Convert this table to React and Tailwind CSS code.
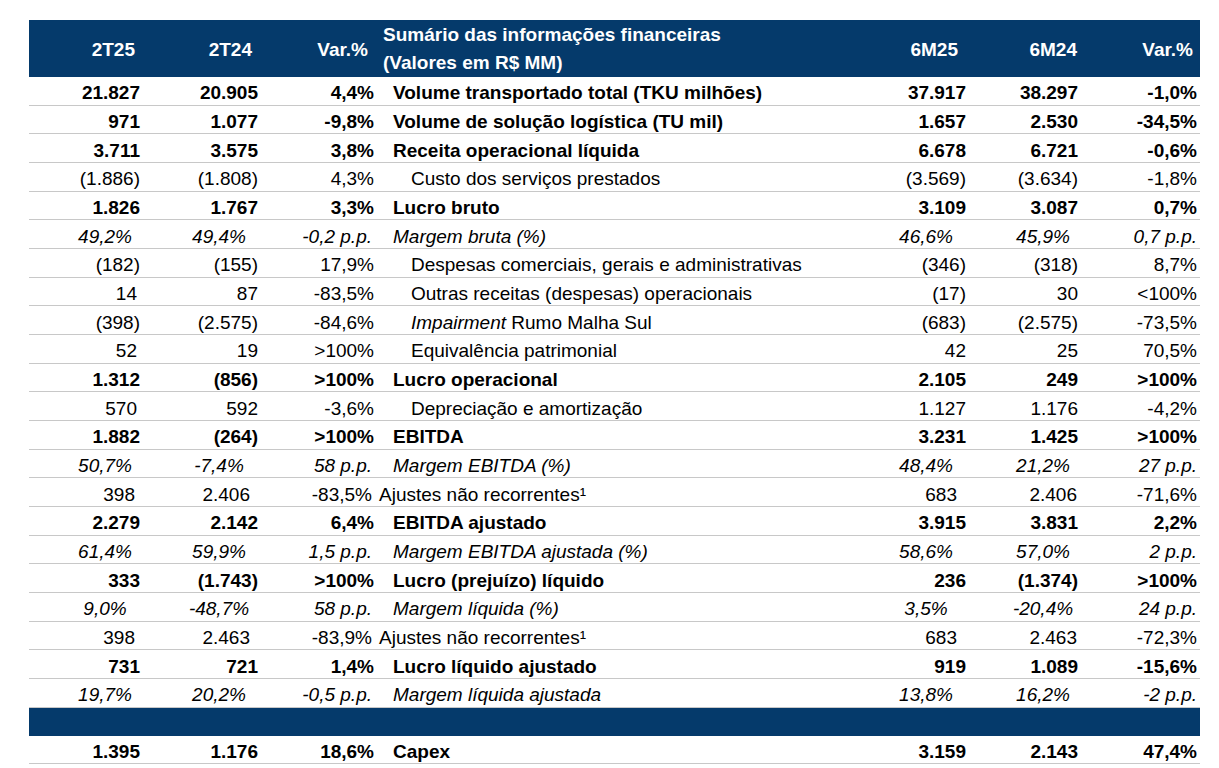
import React from "react";

const rows = [
  ["b", "21.827", "20.905", "4,4%", "Volume transportado total (TKU milhões)", "37.917", "38.297", "-1,0%"],
  ["b", "971", "1.077", "-9,8%", "Volume de solução logística (TU mil)", "1.657", "2.530", "-34,5%"],
  ["b", "3.711", "3.575", "3,8%", "Receita operacional líquida", "6.678", "6.721", "-0,6%"],
  ["n", "(1.886)", "(1.808)", "4,3%", "Custo dos serviços prestados", "(3.569)", "(3.634)", "-1,8%"],
  ["b", "1.826", "1.767", "3,3%", "Lucro bruto", "3.109", "3.087", "0,7%"],
  ["i", "49,2%", "49,4%", "-0,2 p.p.", "Margem bruta (%)", "46,6%", "45,9%", "0,7 p.p."],
  ["n", "(182)", "(155)", "17,9%", "Despesas comerciais, gerais e administrativas", "(346)", "(318)", "8,7%"],
  ["n", "14", "87", "-83,5%", "Outras receitas (despesas) operacionais", "(17)", "30", "<100%"],
  ["m", "(398)", "(2.575)", "-84,6%", "Rumo Malha Sul", "(683)", "(2.575)", "-73,5%"],
  ["n", "52", "19", ">100%", "Equivalência patrimonial", "42", "25", "70,5%"],
  ["b", "1.312", "(856)", ">100%", "Lucro operacional", "2.105", "249", ">100%"],
  ["n", "570", "592", "-3,6%", "Depreciação e amortização", "1.127", "1.176", "-4,2%"],
  ["b", "1.882", "(264)", ">100%", "EBITDA", "3.231", "1.425", ">100%"],
  ["i", "50,7%", "-7,4%", "58 p.p.", "Margem EBITDA (%)", "48,4%", "21,2%", "27 p.p."],
  ["a", "398", "2.406", "-83,5%", "Ajustes não recorrentes¹", "683", "2.406", "-71,6%"],
  ["b", "2.279", "2.142", "6,4%", "EBITDA ajustado", "3.915", "3.831", "2,2%"],
  ["i", "61,4%", "59,9%", "1,5 p.p.", "Margem EBITDA ajustada (%)", "58,6%", "57,0%", "2 p.p."],
  ["b", "333", "(1.743)", ">100%", "Lucro (prejuízo) líquido", "236", "(1.374)", ">100%"],
  ["i", "9,0%", "-48,7%", "58 p.p.", "Margem líquida (%)", "3,5%", "-20,4%", "24 p.p."],
  ["a", "398", "2.463", "-83,9%", "Ajustes não recorrentes¹", "683", "2.463", "-72,3%"],
  ["b", "731", "721", "1,4%", "Lucro líquido ajustado", "919", "1.089", "-15,6%"],
  ["i", "19,7%", "20,2%", "-0,5 p.p.", "Margem líquida ajustada", "13,8%", "16,2%", "-2 p.p."],
];

const grid = "grid grid-cols-[116px_118px_116px_480px_112px_112px_117px]";

// where the italic margin figures sit (they are centred, not right aligned)
const italicCells = [
  "text-center pl-[36px]",
  "text-center pl-[30px]",
  "text-right pr-[7px]",
  null,
  "text-center pl-[22px]",
  "text-center pl-[32px]",
  "text-right pr-[3px]",
];
const plainCells = [
  "text-right pr-[5px]",
  "text-right pr-[5px]",
  "text-right pr-[5px]",
  null,
  "text-right pr-[5px]",
  "text-right pr-[5px]",
  "text-right pr-[3px]",
];
const adjustCells = [
  "text-right pr-[10px]",
  "text-right pr-[13px]",
  "text-right pr-[7px]",
  null,
  "text-right pr-[14px]",
  "text-right pr-[6px]",
  "text-right pr-[3px]",
];

const cellClass = (type, i, value) => {
  if (type === "i") return italicCells[i];
  if (type === "a") return adjustCells[i];
  if ((type === "n" || type === "m") && i === 0 && !value.startsWith("(")) return "text-right pr-[8px]";
  return plainCells[i];
};

const Row = ({ row }) => {
  const [type, ...cells] = row;
  const weight = type === "b" ? "font-bold" : type === "i" ? "italic" : "";
  return (
    <div className={`${grid} h-[28.68px] items-center pt-[5px] border-b border-[#c8c8c8] ${weight}`}>
      {cells.map((c, i) => {
        if (i === 3) {
          const pad = type === "n" || type === "m" ? "pl-[32px]" : type === "a" ? "pl-0" : "pl-[14px]";
          return (
            <div key={i} className={`${pad} whitespace-nowrap`}>
              {type === "m" && <span className="italic">Impairment </span>}
              {c}
            </div>
          );
        }
        return (
          <div key={i} className={`${cellClass(type, i, c)} whitespace-nowrap`}>
            {c}
          </div>
        );
      })}
    </div>
  );
};

const App = () => {
  return (
    <main
      className="w-[1219px] h-[768px] bg-white text-black text-[19px] leading-[22px] pt-[20px] pl-[29px] overflow-hidden"
      style={{ fontFamily: '"Liberation Sans", Arial, sans-serif' }}
    >
      <div className="w-[1171px]">
        <div className={`${grid} h-[57px] items-center bg-[#053a6b] text-white font-bold`}>
          <div className="text-right pr-[10px] pt-[2px]">2T25</div>
          <div className="text-right pr-[11px] pt-[2px]">2T24</div>
          <div className="text-right pr-[11px] pt-[2px]">Var.%</div>
          <div className="pl-[4px] leading-[28px] whitespace-nowrap">
            <p>Sumário das informações financeiras</p>
            <p>(Valores em R$ MM)</p>
          </div>
          <div className="text-right pr-[13px] pt-[2px]">6M25</div>
          <div className="text-right pr-[6px] pt-[2px]">6M24</div>
          <div className="text-right pr-[7px] pt-[2px]">Var.%</div>
        </div>

        {rows.map((r, idx) => (
          <Row key={idx} row={r} />
        ))}

        <div className="h-[28px] bg-[#053a6b]"></div>

        <Row row={["b", "1.395", "1.176", "18,6%", "Capex", "3.159", "2.143", "47,4%"]} />
      </div>
    </main>
  );
};

export default App;
